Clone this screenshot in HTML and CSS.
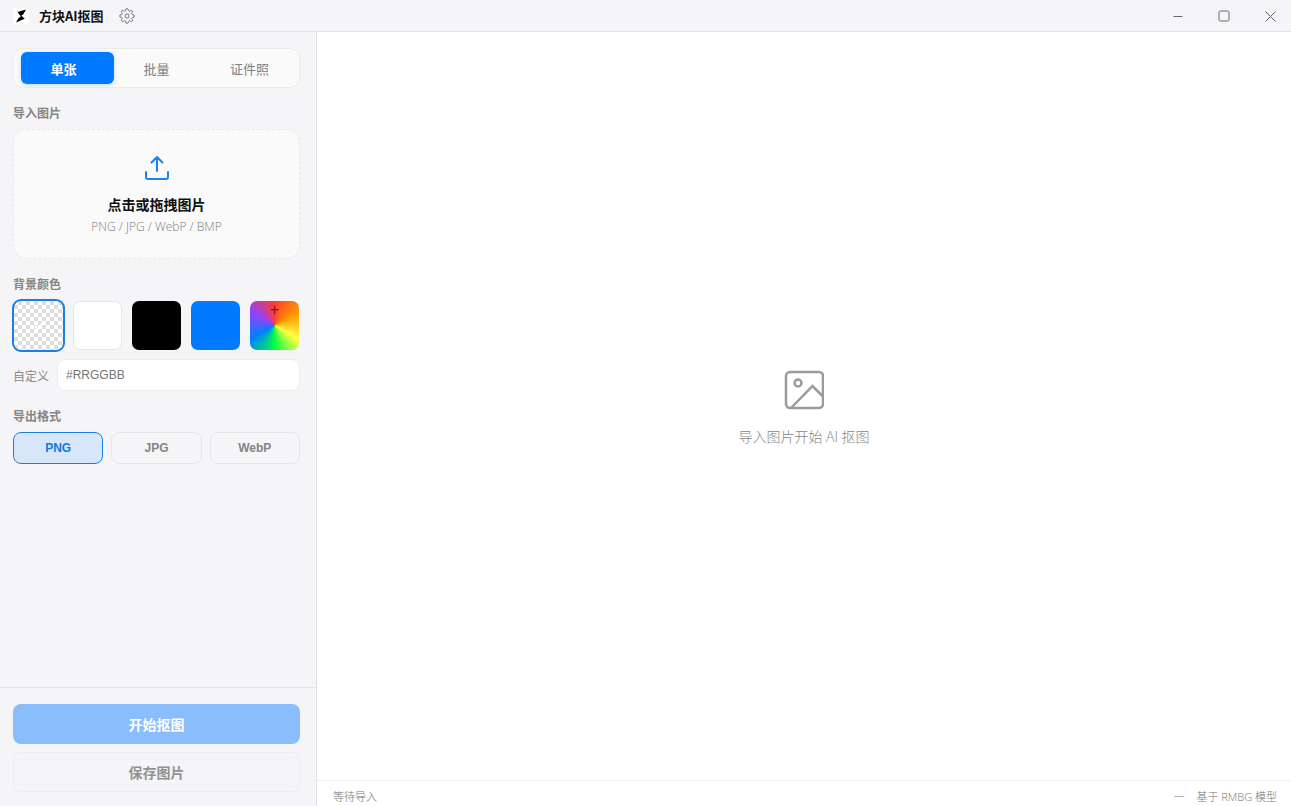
FILE: index.html
```html
<!DOCTYPE html>
<html lang="zh-CN">
<head>
    <meta charset="UTF-8">
    <meta name="viewport" content="width=device-width, initial-scale=1.0">
    <title>方块AI抠图</title>
    <link rel="stylesheet" href="styles.css">
</head>
<body>
    <header class="titlebar">
        <svg class="logo" viewBox="0 0 16 16"><rect width="16" height="16" rx="3" fill="#fff"/><path d="M4.500 4 13 1.500 10.200 6.500 8.200 7.600 11.800 10.800 3 14.600 5.500 10 7.800 8.600Z" fill="#000"/></svg>
        <h1 class="app-name">方块AI抠图</h1>
        <button class="settings-btn" aria-label="设置">
            <svg width="16" height="16" viewBox="0 0 24 24" fill="none" stroke="currentColor" stroke-width="1.5" stroke-linejoin="round"><circle cx="12" cy="12" r="3"/><path d="M19.4 15a1.65 1.65 0 0 0 .33 1.82l.06.06a2 2 0 1 1-2.83 2.83l-.06-.06a1.65 1.65 0 0 0-2.8 1.18V21a2 2 0 0 1-4 0v-.09a1.65 1.65 0 0 0-2.91-1.26l-.06.06a2 2 0 1 1-2.83-2.83l.06-.06A1.65 1.65 0 0 0 3.09 14H3a2 2 0 0 1 0-4h.09a1.65 1.65 0 0 0 1.26-2.91l-.06-.06a2 2 0 1 1 2.83-2.83l.06.06A1.65 1.65 0 0 0 10 3.09V3a2 2 0 0 1 4 0v.09a1.65 1.65 0 0 0 2.82 1.17l.06-.06a2 2 0 1 1 2.83 2.83l-.06.06A1.65 1.65 0 0 0 20.91 10H21a2 2 0 0 1 0 4h-.09a1.65 1.65 0 0 0-1.51 1Z"/></svg>
        </button>
        <div class="window-controls">
            <button aria-label="最小化"><svg width="12" height="12" viewBox="0 0 12 12"><path d="M1.500 6.500h9"/></svg></button>
            <button aria-label="最大化"><svg width="12" height="12" viewBox="0 0 12 12"><rect x="1" y="1" width="10" height="10" rx="1.500"/></svg></button>
            <button aria-label="关闭"><svg width="12" height="12" viewBox="0 0 12 12"><path d="M1.500 1.500l10 10M11.500 1.500l-10 10"/></svg></button>
        </div>
    </header>

    <div class="layout">
        <aside class="sidebar">
            <div class="panel">
                <div class="tabs">
                    <button class="tab active">单张</button>
                    <button class="tab">批量</button>
                    <button class="tab">证件照</button>
                </div>

                <section class="section">
                    <h2 class="section-title">导入图片</h2>
                    <button class="dropzone">
                        <svg width="28" height="28" viewBox="0 0 28 28" fill="none" stroke="currentColor" stroke-width="2" stroke-linecap="round" stroke-linejoin="round"><path d="M14 17V3M8.500 8.500 14 3l5.500 5.500M3 18v5q0 2 2 2h18q2 0 2-2v-5"/></svg>
                        <span class="drop-title">点击或拖拽图片</span>
                        <span class="drop-hint">PNG / JPG / WebP / BMP</span>
                    </button>
                </section>

                <section class="section">
                    <h2 class="section-title">背景颜色</h2>
                    <div class="swatches">
                        <button class="swatch transparent active" aria-label="透明">
                            <svg width="10" height="10" viewBox="0 0 10 10" fill="none" stroke="#fff" stroke-width="2"><path d="M1 5l3 3 5-6"/></svg>
                        </button>
                        <button class="swatch white" aria-label="白色"></button>
                        <button class="swatch black" aria-label="黑色"></button>
                        <button class="swatch blue" aria-label="蓝色"></button>
                        <button class="swatch picker" aria-label="选择颜色">+</button>
                    </div>
                    <div class="custom-color">
                        <label for="hexInput">自定义</label>
                        <input type="text" id="hexInput" placeholder="#RRGGBB">
                    </div>
                </section>

                <section class="section">
                    <h2 class="section-title">导出格式</h2>
                    <div class="formats">
                        <button class="format active">PNG</button>
                        <button class="format">JPG</button>
                        <button class="format">WebP</button>
                    </div>
                </section>
            </div>

            <div class="actions">
                <button class="btn primary" disabled>开始抠图</button>
                <button class="btn secondary" disabled>保存图片</button>
            </div>
        </aside>

        <main class="workspace">
            <div class="empty">
                <svg width="40" height="40" viewBox="0 0 40 40" fill="none" stroke="currentColor" stroke-width="2.500"><rect x="2" y="2" width="37" height="36" rx="4"/><circle cx="14" cy="13" r="3.500"/><path d="M7 38 28.500 16 39 26.500"/></svg>
                <p>导入图片开始 AI 抠图</p>
            </div>
            <footer class="statusbar">
                <span>等待导入</span>
                <span class="status-right"><span>—</span><span>基于 RMBG 模型</span></span>
            </footer>
        </main>
    </div>
</body>
</html>
```

FILE: styles.css
```css
* {
    box-sizing: border-box;
}

body {
    display: flex;
    flex-direction: column;
    height: 100vh;
    margin: 0;
    background-color: #f5f5f7;
    color: #111;
    font-family: "Open Sans", "Noto Sans CJK SC", sans-serif;
    font-size: 13px;
}

button,
input {
    padding: 0;
    border: none;
    background: none;
    font-family: "Liberation Sans", "Noto Sans CJK SC", sans-serif;
}

h1,
h2,
p {
    margin: 0;
}

svg {
    display: block;
}

/* title bar */
.titlebar {
    display: flex;
    align-items: center;
    height: 32px;
    padding-left: 13px;
    border-bottom: 1px solid #e2e2e5;
}

.logo {
    width: 16px;
    height: 16px;
}

.app-name {
    margin: 0 15px 0 10px;
    font-family: "Noto Sans CJK SC", sans-serif;
    font-size: 13px;
    font-weight: 600;
}

.settings-btn {
    color: #777;
}

.window-controls {
    display: flex;
    gap: 4px;
    height: 100%;
    margin-left: auto;
}

.window-controls button {
    display: flex;
    align-items: center;
    justify-content: center;
    width: 42px;
}

.window-controls svg {
    fill: none;
    stroke: #666;
}

.layout {
    display: flex;
    flex: 1;
    min-height: 0;
}

/* sidebar */
.sidebar {
    display: flex;
    flex-direction: column;
    width: 317px;
    border-right: 1px solid #e2e2e5;
}

.panel {
    flex: 1;
    padding: 16px 16px 0 13px;
}

.tabs {
    position: relative;
    display: flex;
    padding: 3px;
    border: 1px solid #ececee;
    border-radius: 10px;
    background-color: #fafafa;
}

.tabs::before {
    content: "";
    position: absolute;
    top: 3px;
    left: 7px;
    width: 93px;
    height: 32px;
    border-radius: 6px;
    background-color: #007aff;
    box-shadow: 0 1px 4px rgba(0, 122, 255, 0.25);
}

.tab {
    position: relative;
    flex: 1;
    height: 32px;
    color: #808080;
    font-size: 13px;
}

.tab.active {
    color: #fff;
    font-weight: 600;
}

.section {
    margin-top: 16px;
}

.section-title {
    margin-bottom: 6px;
    color: #858585;
    font-size: 12px;
    font-weight: 600;
    line-height: 19px;
}

.dropzone {
    display: flex;
    flex-direction: column;
    align-items: center;
    justify-content: center;
    width: 100%;
    height: 130px;
    padding-top: 4px;
    border: 1px dashed #e8e8ea;
    border-radius: 14px;
    background-color: #fafafa;
}

.dropzone svg {
    color: #1a84ec;
}

.drop-title {
    margin-top: 12px;
    color: #111;
    font-size: 14px;
    font-weight: 600;
    line-height: 22px;
}

.drop-hint {
    color: #808080;
    font-family: "Open Sans", sans-serif;
    font-size: 12px;
    font-weight: 300;
    line-height: 22px;
}

.swatches {
    display: grid;
    grid-template-columns: repeat(5, 1fr);
    gap: 8px;
}

.swatch {
    aspect-ratio: 1;
    border: 1px solid transparent;
    border-radius: 8px;
    background-clip: padding-box;
}

.swatch svg {
    margin: 0 auto;
}

.swatch.active {
    border-color: #fff;
    outline: 2px solid #1a7fe0;
    outline-offset: -1px;
}

.transparent {
    background: repeating-conic-gradient(#ddd 0% 25%, #fff 0% 50%) 0 0 / 8px 8px;
}

.white {
    background-color: #fff;
    box-shadow: inset 0 0 0 1px #e6e6e9;
}

.black {
    background-color: #000;
}

.blue {
    background-color: #007aff;
}

.picker {
    padding-bottom: 32px;
    background: conic-gradient(#ff3b30, #ff9500, #ffff40, #00ff40, #0080ff, #8e44ff, #ff3b30) padding-box;
    color: #7a1a1a;
    font-size: 16px;
    line-height: 16px;
}

.custom-color {
    display: flex;
    align-items: center;
    gap: 8px;
    margin-top: 8px;
}

.custom-color label {
    padding-top: 2px;
    color: #8a8a8a;
    font-size: 12px;
}

.custom-color input {
    flex: 1;
    height: 32px;
    padding: 0 8px;
    border: 1px solid #ececee;
    border-radius: 8px;
    background-color: #fff;
    font-size: 12px;
}

.formats {
    display: flex;
    gap: 8px;
}

.format {
    flex: 1;
    height: 32px;
    border: 1px solid #e6e6e9;
    border-radius: 8px;
    color: #858585;
    font-size: 12px;
    font-weight: 600;
}

.format.active {
    border-color: #1a7fe0;
    background-color: #d7e7f9;
    color: #0f78e8;
}

.actions {
    display: flex;
    flex-direction: column;
    gap: 8px;
    padding: 16px 16px 14px 13px;
    border-top: 1px solid #e2e2e5;
}

.btn {
    height: 40px;
    border-radius: 8px;
    font-size: 14px;
    font-weight: 600;
}

.primary {
    background-color: #8abdfc;
    color: #fff;
}

.secondary {
    border: 1px solid #eeeef0;
    color: #929292;
}

/* preview area */
.workspace {
    display: flex;
    flex: 1;
    flex-direction: column;
    background-color: #fff;
}

.empty {
    display: flex;
    flex: 1;
    flex-direction: column;
    align-items: center;
    justify-content: center;
    gap: 16px;
    padding-top: 6px;
    color: #9a9a9a;
    font-size: 14px;
    font-weight: 300;
    line-height: 22px;
}

.empty p {
    color: #858585;
}

.statusbar {
    display: flex;
    align-items: center;
    justify-content: space-between;
    height: 26px;
    padding: 4px 14px 0 16px;
    border-top: 1px solid #ececee;
    color: #757575;
    font-size: 11px;
    font-weight: 300;
}

.status-right {
    display: flex;
    gap: 12px;
}
```
